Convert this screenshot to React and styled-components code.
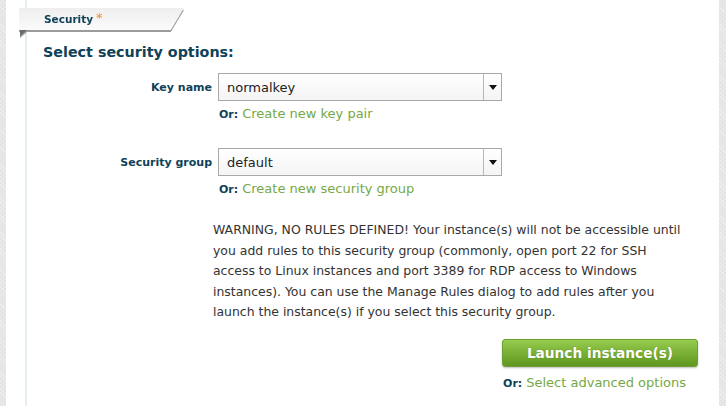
import React from "react";
import styled, { createGlobalStyle } from "styled-components";

const GlobalStyle = createGlobalStyle`
  html, body {
    margin: 0;
    padding: 0;
    background: #ffffff;
  }
  body {
    font-family: "DejaVu Sans", Verdana, sans-serif;
    color: #333333;
  }
`;

const Page = styled.div`
  display: flex;
  height: 406px;
  overflow: hidden;
`;

const Strip = styled.div`
  width: ${(p) => p.$width}px;
  flex: none;
  background-color: #e5e3e5;
  background-image: repeating-linear-gradient(
    45deg,
    rgba(255, 255, 255, 0.35) 0px,
    rgba(255, 255, 255, 0.35) 1px,
    transparent 1px,
    transparent 3px
  );
`;

const Panel = styled.div`
  flex: 1;
  background: #ffffff;
  padding-left: 19px;
  display: flex;
`;

const Column = styled.div`
  flex: 1;
  border-left: 2px solid #e4eff3;
  padding-top: 8px;
  padding-right: 21px;
`;

const Tab = styled.div`
  position: relative;
  margin-left: -8px;
  width: 165px;
  height: 22px;
  display: flex;
  align-items: center;
  padding-left: 25px;
  box-sizing: border-box;
  font-size: 10.5px;
  font-weight: bold;
  color: #0f4259;
  filter: drop-shadow(0 2px 0 #9a9a9a);

  &::before {
    content: "";
    position: absolute;
    inset: 0;
    background: linear-gradient(#eeeeee, #fbfbfb);
    clip-path: polygon(0 0, 100% 0, 92% 100%, 0 100%);
    z-index: -1;
  }

  &::after {
    content: "";
    position: absolute;
    left: 1px;
    top: 22px;
    border-top: 6px solid #6b6b6b;
    border-right: 7px solid transparent;
  }
`;

const Required = styled.span`
  color: #f08a2e;
  font-size: 13px;
  font-weight: normal;
  margin-left: 3px;
  position: relative;
  top: -2px;
`;

const Body = styled.div`
  padding-left: 16px;
  padding-top: 14px;
`;

const Heading = styled.h2`
  margin: 0 0 13px 0;
  font-size: 14.3px;
  font-weight: bold;
  color: #0f4259;
`;

const Field = styled.div`
  display: grid;
  grid-template-columns: 169px 284px;
  column-gap: 6px;
  row-gap: 5px;
  margin-bottom: ${(p) => p.$gap}px;
`;

const Label = styled.label`
  justify-self: end;
  align-self: center;
  font-size: 11px;
  font-weight: bold;
  color: #0f4259;
`;

const Select = styled.div`
  height: 28px;
  box-sizing: border-box;
  border: 1px solid #a8a8a8;
  background: linear-gradient(#ffffff, #f4f4f4);
  display: flex;
  align-items: stretch;
`;

const SelectValue = styled.div`
  flex: 1;
  display: flex;
  align-items: center;
  padding-left: 8px;
  font-size: 13px;
  color: #222222;
`;

const SelectArrow = styled.div`
  width: 17px;
  border-left: 1px solid #b8b8b8;
  display: flex;
  align-items: center;
  justify-content: center;

  &::after {
    content: "";
    border-top: 5px solid #111111;
    border-left: 4px solid transparent;
    border-right: 4px solid transparent;
  }
`;

const OrLine = styled.div`
  grid-column: 2;
  font-size: 13px;
  padding-left: 1px;
`;

const Or = styled.span`
  font-size: 11px;
  font-weight: bold;
  color: #0f4259;
  margin-right: 4px;
`;

const Link = styled.a`
  color: #76a846;
  text-decoration: none;
  cursor: pointer;
`;

const Warning = styled.p`
  max-width: 476px;
  margin: 0 0 16px 170px;
  font-size: 12.45px;
  line-height: 20.5px;
  color: #333333;
`;

const Actions = styled.div`
  display: flex;
  flex-direction: column;
  align-items: flex-end;
  gap: 8px;
`;

const LaunchButton = styled.button`
  width: 196px;
  height: 28px;
  border: 1px solid #6e9f37;
  border-radius: 3px;
  background: linear-gradient(#97cd4f 0%, #79b035 50%, #5f971f 100%);
  box-shadow: 0 1px 2px rgba(0, 0, 0, 0.25);
  color: #ffffff;
  font-family: "DejaVu Sans", Verdana, sans-serif;
  font-size: 13.7px;
  font-weight: bold;
  text-shadow: 0 0 1px rgba(60, 90, 20, 0.5);
  cursor: pointer;
`;

const AdvancedLine = styled.div`
  font-size: 13px;
  padding-right: 12px;
`;

const SelectField = ({ label, value, linkText, gap }) => (
  <Field $gap={gap}>
    <Label>{label}</Label>
    <Select>
      <SelectValue>{value}</SelectValue>
      <SelectArrow />
    </Select>
    <OrLine>
      <Or>Or:</Or>
      <Link>{linkText}</Link>
    </OrLine>
  </Field>
);

export default function App() {
  return (
    <>
      <GlobalStyle />
      <Page>
        <Strip $width={6} />
        <Panel>
          <Column>
            <Tab>
              Security<Required>*</Required>
            </Tab>
            <Body>
              <Heading>Select security options:</Heading>
              <SelectField
                label="Key name"
                value="normalkey"
                linkText="Create new key pair"
                gap={27}
              />
              <SelectField
                label="Security group"
                value="default"
                linkText="Create new security group"
                gap={24}
              />
              <Warning>
                WARNING, NO RULES DEFINED! Your instance(s) will not be accessible
                until you add rules to this security group (commonly, open port 22
                for SSH access to Linux instances and port 3389 for RDP access to
                Windows instances). You can use the Manage Rules dialog to add rules
                after you launch the instance(s) if you select this security group.
              </Warning>
              <Actions>
                <LaunchButton>Launch instance(s)</LaunchButton>
                <AdvancedLine>
                  <Or>Or:</Or>
                  <Link>Select advanced options</Link>
                </AdvancedLine>
              </Actions>
            </Body>
          </Column>
        </Panel>
        <Strip $width={7} />
      </Page>
    </>
  );
}
